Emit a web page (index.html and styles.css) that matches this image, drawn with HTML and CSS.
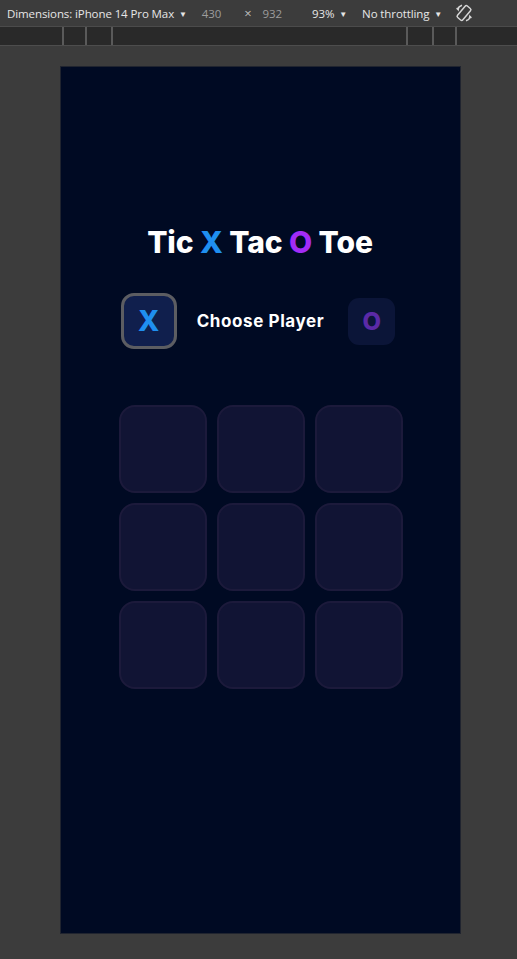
FILE: index.html
```html
<!DOCTYPE html>
<html>
<head>
<meta charset="utf-8">
<link rel="stylesheet" href="styles.css">
</head>
<body>
<div class="toolbar">
  <span class="tb-item">Dimensions: iPhone 14 Pro Max <span class="caret">▼</span></span>
  <span class="tb-num n1">430</span>
  <span class="tb-x">×</span>
  <span class="tb-num n2">932</span>
  <span class="tb-item zoomsel">93% <span class="caret">▼</span></span>
  <span class="tb-item throttle">No throttling <span class="caret">▼</span></span>
  <svg class="rotate" width="20" height="20" viewBox="0 0 20 20">
    <g fill="none" stroke="#d6d6d6" stroke-width="1.5">
      <rect x="6.5" y="2.5" width="7" height="15" rx="1.6" transform="rotate(40 10 10)"/>
      <path d="M3.2 6.5 A8 8 0 0 1 8 2.3"/>
      <path d="M16.8 13.5 A8 8 0 0 1 12 17.7"/>
    </g>
    <path d="M2 5 L4.6 8.4 L5.4 4.6 Z" fill="#d6d6d6"/>
    <path d="M18 15 L15.4 11.6 L14.6 15.4 Z" fill="#d6d6d6"/>
  </svg>
</div>
<div class="ruler">
  <div class="ruler-group left"><i></i><i></i><i></i></div>
  <div class="ruler-group right"><i></i><i></i><i></i></div>
</div>
<div class="stage">
  <div class="device">
    <h1 class="title">Tic <span class="x">X</span> Tac <span class="o">O</span> Toe</h1>
    <div class="players">
      <div class="pbox active"><span class="x">X</span></div>
      <div class="choose">Choose Player</div>
      <div class="pbox inactive"><span class="o dim">O</span></div>
    </div>
    <div class="board">
      <div class="cell"></div><div class="cell"></div><div class="cell"></div>
      <div class="cell"></div><div class="cell"></div><div class="cell"></div>
      <div class="cell"></div><div class="cell"></div><div class="cell"></div>
    </div>
  </div>
</div>
</body>
</html>
```
FILE: styles.css
```css
* { box-sizing: border-box; }
html, body { margin: 0; padding: 0; }
body {
  width: 517px;
  height: 959px;
  background: #3c3c3c;
  overflow: hidden;
  display: flex;
  flex-direction: column;
  font-family: "Open Sans", "Liberation Sans", sans-serif;
}
.toolbar {
  height: 27px;
  display: flex;
  align-items: center;
  padding-left: 7px;
  font-size: 11.5px;
  color: #e6e6e6;
  border-bottom: 1px solid #4b4b4b;
  white-space: nowrap;
  letter-spacing: -0.1px;
}
.caret { font-size: 8px; margin-left: 2px; position: relative; top: -1px; }
.tb-num { color: #9d9d9d; }
.n1 { margin-left: 15px; }
.tb-x { margin-left: 23px; color: #bdbdbd; font-size: 13px; }
.n2 { margin-left: 11px; }
.zoomsel { margin-left: 30px; }
.throttle { margin-left: 15px; }
.rotate { margin-left: 12px; }
.ruler {
  height: 19px;
  background: #292929;
  border-bottom: 1px solid #4d4d4d;
  position: relative;
}
.ruler-group { position: absolute; top: 0; height: 18px; display: flex; }
.ruler-group i { width: 2px; height: 18px; background: #5a5a5a; display: block; }
.ruler-group.left { left: 62px; }
.ruler-group.left i:nth-child(2) { margin-left: 21px; }
.ruler-group.left i:nth-child(3) { margin-left: 24px; }
.ruler-group.right { left: 406px; }
.ruler-group.right i:nth-child(2) { margin-left: 24px; }
.ruler-group.right i:nth-child(3) { margin-left: 21px; }
.stage {
  flex: 1;
  display: flex;
  justify-content: center;
  align-items: flex-start;
  padding-top: 20px;
  padding-left: 3px;
}
.device {
  width: 401px;
  height: 868px;
  background: #000a23;
  border: 1px solid #20242f;
  display: flex;
  flex-direction: column;
  align-items: center;
  font-family: "Inter", "Open Sans", sans-serif;
  color: #fff;
}
.title {
  margin: 155px 0 0;
  font-size: 30px;
  font-weight: 800;
  line-height: 40px;
  letter-spacing: -0.1px;
}
.x { color: #1f8ff0; }
.o { color: #a22cf7; }
.o.dim { color: #5b2aa6; }
.players {
  margin-top: 31px;
  display: flex;
  align-items: center;
  margin-left: -4px;
}
.pbox {
  display: flex;
  align-items: center;
  justify-content: center;
  font-weight: 800;
}
.pbox.active {
  width: 56px;
  height: 56px;
  border: 3px solid #5c5d62;
  border-radius: 13px;
  background: #101f4d;
  font-size: 28px;
}
.pbox.inactive {
  width: 47px;
  height: 47px;
  border-radius: 11px;
  background: #0b1538;
  font-size: 24px;
}
.choose {
  margin: 0 24px 0 20px;
  font-size: 17px;
  font-weight: 700;
  letter-spacing: 0.6px;
}
.board {
  margin-top: 56px;
  display: grid;
  grid-template-columns: repeat(3, 88px);
  grid-auto-rows: 88px;
  gap: 10px;
  margin-left: 1px;
}
.cell {
  background: #111434;
  border: 2px solid #1c1a3b;
  border-radius: 16px;
}
```
